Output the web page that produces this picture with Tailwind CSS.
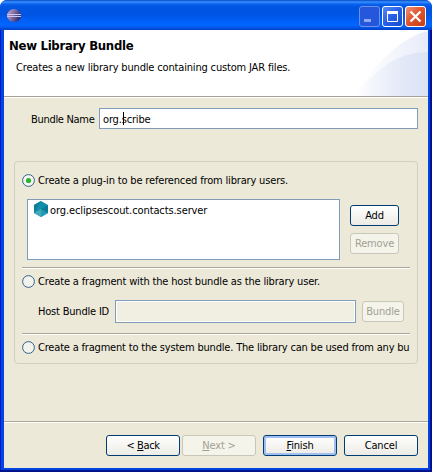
<!DOCTYPE html>
<html lang="en">
<head>
<meta charset="utf-8">
<title>New Library Bundle</title>
<script src="https://cdn.jsdelivr.net/npm/@tailwindcss/browser@4"></script>
</head>
<body class="w-[432px] h-[472px] overflow-hidden bg-white">
<div class="w-[432px] h-[472px] flex flex-col overflow-hidden rounded-t-[7px] bg-[#0831d9] text-[11px] leading-[14px] tracking-[-0.165px] text-black whitespace-nowrap [font-family:'DejaVu_Sans_Condensed','DejaVu_Sans',sans-serif] [font-stretch:condensed]">
  <header class="h-[30px] shrink-0 flex items-center pl-[7px] pr-[6px] pt-[3px] bg-[linear-gradient(180deg,#0648c8_0px,#3a91ff_2px,#0a62ee_4px,#0055e2_7px,#0054e3_14px,#005ef5_20px,#0066ff_25px,#005bf0_27px,#0140c5_30px)]">
    <svg class="-mt-px" width="15" height="14" viewBox="0 0 15 14">
      <defs><linearGradient id="orb" x1="0" x2="1" y2=".4"><stop offset="0" stop-color="#c9a9c4"/><stop offset=".5" stop-color="#8573a6"/><stop offset="1" stop-color="#332a6c"/></linearGradient></defs>
      <ellipse cx="7" cy="6.5" rx="7" ry="6.5" fill="url(#orb)"/>
      <path d="M0 5.500h14M0 7.500h14" stroke="#c6c9f3"/>
    </svg>
    <div class="ml-auto flex gap-[2px]">
      <svg width="21" height="21" viewBox="0 0 21 21"><rect x=".5" y=".5" width="20" height="20" rx="2.5" fill="#2457dc" stroke="#6f91ea"/><rect x="5" y="13" width="7" height="3" fill="#91a7ee"/></svg>
      <svg width="21" height="21" viewBox="0 0 21 21"><defs><linearGradient id="mx" x2="1" y2="1"><stop stop-color="#5c8cf1"/><stop offset=".5" stop-color="#265fe5"/><stop offset="1" stop-color="#164bd0"/></linearGradient></defs><rect x=".5" y=".5" width="20" height="20" rx="2.5" fill="url(#mx)" stroke="#fff"/><path d="M5.500 6v9.500h10V6" fill="none" stroke="#fff"/><path d="M5 6.500h11" stroke="#fff" stroke-width="3"/></svg>
      <svg width="21" height="21" viewBox="0 0 21 21"><defs><linearGradient id="cl" x2="1" y2="1"><stop stop-color="#ee987c"/><stop offset=".45" stop-color="#e25630"/><stop offset="1" stop-color="#c73b10"/></linearGradient></defs><rect x=".5" y=".5" width="20" height="20" rx="2.5" fill="url(#cl)" stroke="#fff"/><path d="M5.500 5.500l10 10M15.500 5.500l-10 10" stroke="#fff" stroke-width="2.300"/></svg>
    </div>
  </header>
  <main class="h-[442px] flex flex-col bg-[#ece9d8] border-l-4 border-r-4 border-b-4 border-[#0144e0] relative">
    <div class="absolute -left-1 top-0 w-px h-[442px] bg-[#0019c8]"></div>
    <div class="absolute -right-1 top-0 w-[2px] h-[442px] bg-[#00108f]"></div>
    <div class="absolute -left-1 -bottom-1 w-[432px] h-[2px] bg-[#00138c]"></div>
    <section class="h-[68px] shrink-0 bg-white border-b border-white">
      <div class="h-[67px] border-b border-[#a5a294] flex flex-col pl-[5px] pt-[8px] relative overflow-hidden">
        <svg class="absolute right-0 top-0" width="78" height="66" viewBox="0 0 78 66"><defs><linearGradient id="s1" gradientUnits="userSpaceOnUse" x1="4" y1="0" x2="78" y2="0"><stop stop-color="#fff"/><stop offset=".5" stop-color="#f5f7fc"/><stop offset="1" stop-color="#e8ecf9"/></linearGradient><linearGradient id="s2" gradientUnits="userSpaceOnUse" x1="8" y1="0" x2="78" y2="0"><stop stop-color="#dce3f5" stop-opacity="0"/><stop offset="1" stop-color="#dce3f5"/></linearGradient></defs><path d="M4 66C24 36 48 8 78 1V66Z" fill="url(#s1)"/><path d="M4 66C28 38 48 22 78 22V66Z" fill="url(#s2)"/></svg>
        <h1 class="relative text-[13px] leading-[16px] font-bold tracking-[-0.28px]">New Library Bundle</h1>
        <p class="relative pl-[7px] mt-[7px]">Creates a new library bundle containing custom JAR files.</p>
      </div>
    </section>
    <div class="h-[21px] mt-[10px] shrink-0 flex items-center">
      <label class="w-[95px] pl-[27px] pt-[2px] tracking-[-0.3px]">Bundle Name</label>
      <div class="w-[319px] h-[21px] bg-white border border-[#7f9db9] pl-[3px] pt-[4px] relative">org.scribe<i class="absolute left-[23px] top-[3px] w-px h-[13px] bg-black"></i></div>
    </div>
    <div class="mt-[32px] ml-[10px] w-[404px] h-[203px] shrink-0 border border-[#d0d0bf] rounded-[4px] px-[7px] flex flex-col">
      <div class="h-[37px] pt-[12px] flex gap-[3px] items-start">
        <svg width="13" height="13" viewBox="0 0 13 13"><circle cx="6.500" cy="6.500" r="5.900" fill="#f5f5f1" stroke="#31608c"/><circle cx="6.500" cy="6.500" r="2.600" fill="#2bb52b"/></svg>
        <span>Create a plug-in to be referenced from library users.</span>
      </div>
      <div class="h-[61px] flex pl-[5px]">
        <div class="w-[313px] h-[61px] shrink-0 bg-white border border-[#7f9db9] flex items-start pl-[6px] pt-px">
          <svg width="14" height="16" viewBox="0 0 14 16"><path d="M7 0l7 4v8l-7 4-7-4V4z" fill="#138fa9"/><path d="M7 0L0 4v8z" fill="#0b7f9c"/><path d="M7 8L0 12l7 4z" fill="#45a9be"/><path d="M7 8l7 4-7 4z" fill="#239bb3"/><path d="M7 8l7-4v8z" fill="#0a7b98"/></svg>
          <span class="ml-[2px] mt-[3px] tracking-[-0.1px]">org.eclipsescout.contacts.server</span>
        </div>
        <div class="pl-[10px] pt-[6px] flex flex-col gap-[7px]">
          <button class="w-[49px] h-[21px] border border-[#003c74] rounded-[3px] bg-gradient-to-b from-white to-[#ecebe5]">Add</button>
          <button class="w-[49px] h-[21px] border border-[#c9c7ba] rounded-[3px] bg-[#f5f4ea] text-[#a1a192]">Remove</button>
        </div>
      </div>
      <div class="mt-[7px] h-[2px] shrink-0 border-t border-[#aca899] bg-white"></div>
      <div class="h-[31px] shrink-0 pt-[6px] flex gap-[3px] items-start">
        <svg width="13" height="13" viewBox="0 0 13 13"><circle cx="6.500" cy="6.500" r="5.900" fill="#f3f3ee" stroke="#31608c"/></svg>
        <span>Create a fragment with the host bundle as the library user.</span>
      </div>
      <div class="h-[23px] shrink-0 flex items-center">
        <label class="w-[93px] pl-[16px] tracking-[-0.2px]">Host Bundle ID</label>
        <div class="w-[241px] h-[23px] border border-[#7f9db9] bg-[#f1eee2] shadow-[inset_0_0_0_1px_white]"></div>
        <button class="ml-[6px] w-[42px] h-[21px] border border-[#c9c7ba] rounded-[3px] bg-[#f5f4ea] text-[#a1a192]">Bundle</button>
      </div>
      <div class="mt-[10px] h-[2px] shrink-0 border-t border-[#aca899] bg-white"></div>
      <div class="h-[28px] shrink-0 pt-[6px] flex gap-[3px] items-start overflow-hidden">
        <svg class="shrink-0" width="13" height="13" viewBox="0 0 13 13"><circle cx="6.500" cy="6.500" r="5.900" fill="#f3f3ee" stroke="#31608c"/></svg>
        <span class="tracking-[-0.19px]">Create a fragment to the system bundle. The library can be used from any bu</span>
      </div>
    </div>
    <footer class="mt-auto h-[47px] shrink-0 border-t border-[#aca899] shadow-[inset_0_1px_white] flex pt-[13px] pl-[102px]">
      <button class="w-[74px] h-[21px] border border-[#003c74] rounded-[3px] bg-gradient-to-b from-white to-[#ecebe5] tracking-[-0.4px]">&lt; <u>B</u>ack</button>
      <button class="ml-[2px] w-[74px] h-[21px] border border-[#c9c7ba] rounded-[3px] bg-[#f5f4ea] text-[#a1a192]"><u>N</u>ext &gt;</button>
      <button class="ml-[7px] w-[74px] h-[21px] border border-[#003c74] rounded-[3px] bg-gradient-to-b from-white to-[#ecebe5] shadow-[inset_0_0_0_2px_#a1bff0]"><u>F</u>inish</button>
      <button class="ml-[7px] w-[74px] h-[21px] border border-[#003c74] rounded-[3px] bg-gradient-to-b from-white to-[#ecebe5]">Cancel</button>
    </footer>
  </main>
</div>
</body>
</html>
